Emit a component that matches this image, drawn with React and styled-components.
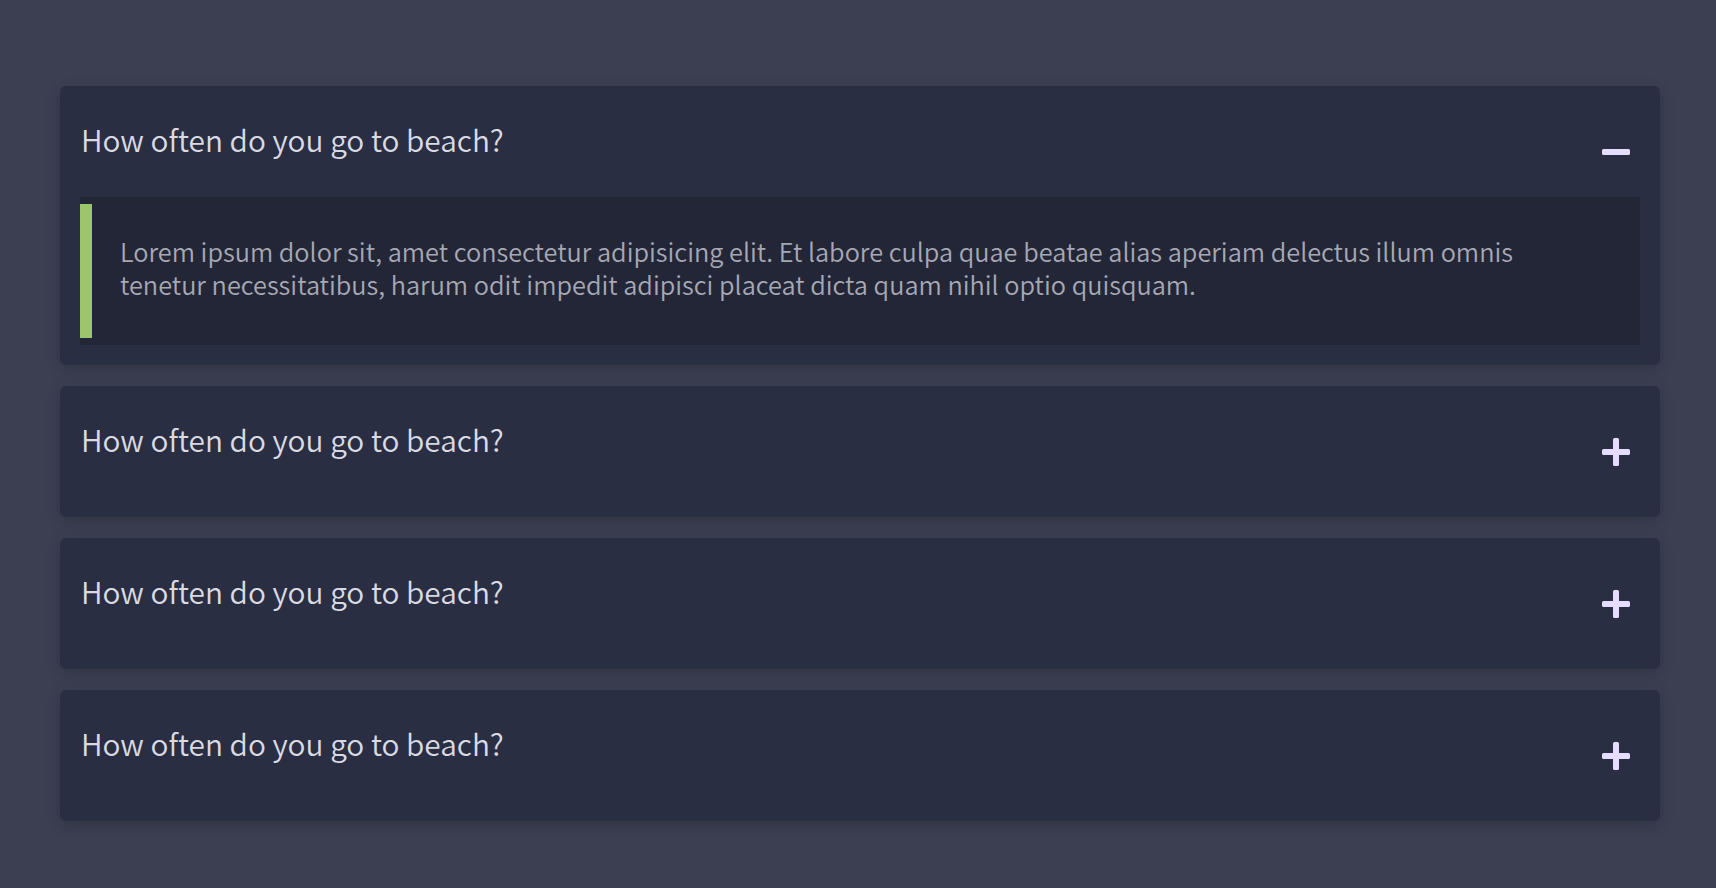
import React, { useState } from "react"
import styled, { createGlobalStyle } from "styled-components"

const GlobalStyle = createGlobalStyle`
  html, body {
    margin: 0;
    padding: 0;
    background: #3c3f52;
  }
  body {
    font-family: "Noto Sans CJK KR", "Noto Sans", sans-serif;
  }
`

const Page = styled.div`
  min-height: 888px;
  box-sizing: border-box;
  padding: 86px 56px 40px 60px;
`

const List = styled.div`
  display: flex;
  flex-direction: column;
  gap: 21px;
`

const Card = styled.div`
  background: #2a2e42;
  border-radius: 6px;
  padding: 20px;
  box-shadow: 0 4px 14px rgba(20, 22, 34, 0.25);
`

const Header = styled.div`
  display: flex;
  align-items: center;
  justify-content: space-between;
  min-height: 91px;
  cursor: pointer;
`

const Question = styled.h3`
  margin: 15px 0 40px 1px;
  font-size: 29.8px;
  line-height: 36px;
  font-weight: 350;
  color: #dadae3;
`

const Toggle = styled.button`
  display: flex;
  align-items: center;
  justify-content: center;
  width: 28px;
  height: 28px;
  padding: 0;
  margin-right: 10px;
  border: none;
  background: transparent;
  cursor: pointer;
`

const Answer = styled.div`
  background: #222637;
  padding: 7px 0;
`

const AnswerBody = styled.p`
  margin: 0;
  border-left: 12px solid #9cc66b;
  padding: 31px 64px 37px 28px;
  font-size: 25.3px;
  line-height: 33px;
  font-weight: 350;
  color: #a6a8b4;
`

function Icon({ open }) {
  return (
    <svg width="28" height="28" viewBox="0 0 28 28">
      <rect x="0" y="11" width="28" height="6" rx="1.5" fill="#e6dcff" />
      {!open && <rect x="11" y="0" width="6" height="28" rx="1.5" fill="#e6dcff" />}
    </svg>
  )
}

const answer =
  "Lorem ipsum dolor sit, amet consectetur adipisicing elit. Et labore culpa quae beatae alias aperiam delectus illum omnis tenetur necessitatibus, harum odit impedit adipisci placeat dicta quam nihil optio quisquam."

const items = [
  { q: "How often do you go to beach?", a: answer },
  { q: "How often do you go to beach?", a: answer },
  { q: "How often do you go to beach?", a: answer },
  { q: "How often do you go to beach?", a: answer },
]

export default function App() {
  const [open, setOpen] = useState(0)

  return (
    <Page>
      <GlobalStyle />
      <List>
        {items.map((item, i) => (
          <Card key={i}>
            <Header onClick={() => setOpen(open === i ? -1 : i)}>
              <Question>{item.q}</Question>
              <Toggle aria-label="toggle">
                <Icon open={open === i} />
              </Toggle>
            </Header>
            {open === i && (
              <Answer>
                <AnswerBody>{item.a}</AnswerBody>
              </Answer>
            )}
          </Card>
        ))}
      </List>
    </Page>
  )
}
